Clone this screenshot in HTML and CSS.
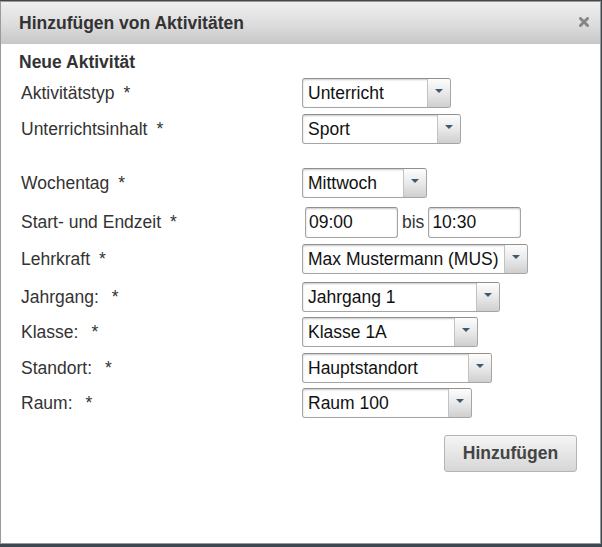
FILE: index.html
```html
<!DOCTYPE html>
<html lang="de">
<head>
<meta charset="utf-8">
<title>Hinzufügen von Aktivitäten</title>
<link rel="stylesheet" href="styles.css">
</head>
<body>
<div class="dialog">
  <div class="titlebar">
    <span class="title">Hinzufügen von Aktivitäten</span>
    <span class="close" aria-label="Schließen">
      <svg width="10" height="10" viewBox="0 0 10 10"><path d="M1.5 1.5 L8.5 8.5 M8.5 1.5 L1.5 8.5" stroke="#858585" stroke-width="2.8" stroke-linecap="square"/></svg>
    </span>
  </div>
  <div class="content">
    <h2 class="section">Neue Aktivität</h2>
    <div class="form">
      <label class="lbl">Aktivitätstyp<span class="req">*</span></label>
      <div class="select w1"><span class="val">Unterricht</span><span class="arrow"><i></i></span></div>

      <label class="lbl">Unterrichtsinhalt<span class="req">*</span></label>
      <div class="select w2"><span class="val">Sport</span><span class="arrow"><i></i></span></div>

      <label class="lbl">Wochentag<span class="req">*</span></label>
      <div class="select w3"><span class="val">Mittwoch</span><span class="arrow"><i></i></span></div>

      <label class="lbl">Start- und Endzeit<span class="req">*</span></label>
      <div class="times">
        <input class="time" type="text" value="09:00">
        <span class="bis">bis</span>
        <input class="time" type="text" value="10:30">
      </div>

      <label class="lbl">Lehrkraft<span class="req">*</span></label>
      <div class="select w5"><span class="val">Max Mustermann (MUS)</span><span class="arrow"><i></i></span></div>

      <label class="lbl">Jahrgang:<span class="req wide">*</span></label>
      <div class="select w6"><span class="val">Jahrgang 1</span><span class="arrow"><i></i></span></div>

      <label class="lbl">Klasse:<span class="req wide">*</span></label>
      <div class="select w7"><span class="val">Klasse 1A</span><span class="arrow"><i></i></span></div>

      <label class="lbl">Standort:<span class="req wide">*</span></label>
      <div class="select w8"><span class="val">Hauptstandort</span><span class="arrow"><i></i></span></div>

      <label class="lbl">Raum:<span class="req wide">*</span></label>
      <div class="select w9"><span class="val">Raum 100</span><span class="arrow"><i></i></span></div>
    </div>
    <div class="actions">
      <button class="btn" type="button">Hinzufügen</button>
    </div>
  </div>
</div>
</body>
</html>
```
FILE: styles.css
```css
html, body {
  margin: 0;
  padding: 0;
  background: #3e4850;
  height: 100%;
  overflow: hidden;
}

body {
  font-family: "Liberation Sans", Arial, sans-serif;
  color: #333;
  padding-top: 1px;
}

.dialog {
  box-sizing: border-box;
  width: 601px;
  height: 543px;
  background: #fff;
  border: 1px solid #9a9a9a;
}

.titlebar {
  height: 42px;
  display: flex;
  align-items: center;
  justify-content: space-between;
  padding: 0 11px 0 18px;
  background: linear-gradient(to bottom, #efefef 0%, #dedede 50%, #c7c7c7 100%);
}

.title {
  font-weight: bold;
  font-size: 17.5px;
  color: #333;
}

.close {
  display: flex;
  width: 10px;
  height: 10px;
  margin-top: -3px;
}

.content {
  padding: 8px 23px 0 18px;
}

.section {
  margin: 0;
  font-size: 17.5px;
  line-height: 20px;
  font-weight: bold;
  color: #333;
}

.form {
  margin-top: 6px;
  margin-left: 2px;
  display: grid;
  grid-template-columns: 281px auto;
  grid-template-rows: 36px 54px 39px 37px 38px 35px 36px 35px 30px;
  align-items: start;
}

.lbl {
  font-size: 17.5px;
  line-height: 30px;
  color: #333;
  white-space: nowrap;
}

.req {
  margin-left: 9px;
}

.req.wide {
  margin-left: 13px;
}

.select {
  box-sizing: border-box;
  height: 30px;
  display: flex;
  border: 1px solid #a5a5a5;
  border-top-color: #8f8f8f;
  border-radius: 3px;
  background: #fff;
  box-shadow: inset 0 1px 2px rgba(0, 0, 0, 0.22);
  overflow: hidden;
}

.val {
  flex: 1;
  padding-left: 5px;
  font-size: 17.5px;
  line-height: 28px;
  color: #111;
  white-space: nowrap;
  overflow: hidden;
}

.arrow {
  width: 22px;
  display: flex;
  align-items: center;
  justify-content: center;
  border-left: 1px solid #c2c2c2;
  background: linear-gradient(to bottom, #fdfdfd 0%, #e9e9e9 50%, #cfcfcf 100%);
}

.arrow i {
  width: 0;
  height: 0;
  border-left: 4px solid transparent;
  border-right: 4px solid transparent;
  border-top: 4px solid #3f596e;
  margin-top: -4px;
}

.w1 { width: 149px; }
.w2 { width: 159px; }
.w3 { width: 125px; }
.w5 { width: 226px; }
.w6 { width: 198px; }
.w7 { width: 176px; }
.w8 { width: 190px; }
.w9 { width: 170px; }

.times {
  display: flex;
  align-items: center;
  gap: 4px;
  padding-left: 3px;
}

.time {
  box-sizing: border-box;
  height: 31px;
  width: 93px;
  margin: 0;
  padding: 0 0 0 3px;
  border: 1px solid #a5a5a5;
  border-top-color: #8f8f8f;
  border-radius: 3px;
  box-shadow: inset 0 1px 2px rgba(0, 0, 0, 0.22);
  font-family: "Liberation Sans", Arial, sans-serif;
  font-size: 17.5px;
  color: #111;
  background: #fff;
}

.bis {
  font-size: 17.5px;
  color: #333;
}

.actions {
  display: flex;
  justify-content: flex-end;
  margin-top: 17px;
}

.btn {
  box-sizing: border-box;
  width: 133px;
  height: 37px;
  margin: 0;
  padding: 0;
  border: 1px solid #b4b4b4;
  border-radius: 3px;
  background: linear-gradient(to bottom, #f5f5f5 0%, #e6e6e6 50%, #d6d6d6 100%);
  font-family: "Liberation Sans", Arial, sans-serif;
  font-size: 17.5px;
  font-weight: bold;
  color: #444;
}
```
